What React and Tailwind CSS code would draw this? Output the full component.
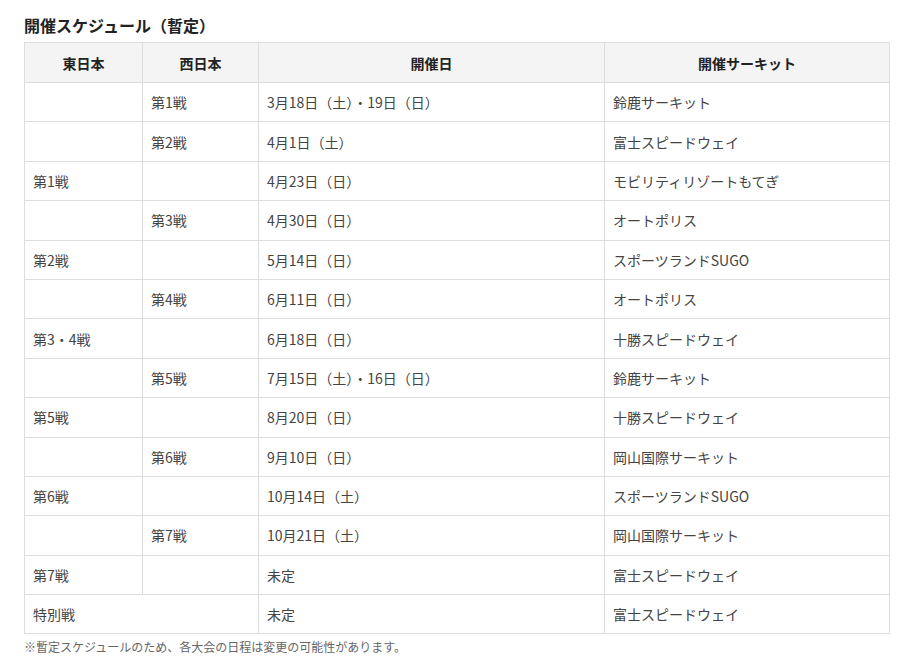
const rows = [
  { east: '', west: '第1戦', date: '3月18日（土）・19日（日）', circuit: '鈴鹿サーキット' },
  { east: '', west: '第2戦', date: '4月1日（土）', circuit: '富士スピードウェイ' },
  { east: '第1戦', west: '', date: '4月23日（日）', circuit: 'モビリティリゾートもてぎ' },
  { east: '', west: '第3戦', date: '4月30日（日）', circuit: 'オートポリス' },
  { east: '第2戦', west: '', date: '5月14日（日）', circuit: 'スポーツランドSUGO' },
  { east: '', west: '第4戦', date: '6月11日（日）', circuit: 'オートポリス' },
  { east: '第3・4戦', west: '', date: '6月18日（日）', circuit: '十勝スピードウェイ' },
  { east: '', west: '第5戦', date: '7月15日（土）・16日（日）', circuit: '鈴鹿サーキット' },
  { east: '第5戦', west: '', date: '8月20日（日）', circuit: '十勝スピードウェイ' },
  { east: '', west: '第6戦', date: '9月10日（日）', circuit: '岡山国際サーキット' },
  { east: '第6戦', west: '', date: '10月14日（土）', circuit: 'スポーツランドSUGO' },
  { east: '', west: '第7戦', date: '10月21日（土）', circuit: '岡山国際サーキット' },
  { east: '第7戦', west: '', date: '未定', circuit: '富士スピードウェイ' },
];

const cell = 'border border-[#dddddd] pl-[8px] pr-2 py-0 text-left align-middle';
const head = 'border border-[#dddddd] bg-[#f4f4f4] font-bold text-center align-middle text-[#222222]';

export default function App() {
  return (
    <div
      className="min-h-[668px] bg-white px-6 pt-[13px] text-[#444444]"
      style={{ fontFamily: '"Noto Sans CJK JP", "Noto Sans", sans-serif' }}
    >
      <h2 className="text-[16px] font-bold leading-6 text-[#222222]">開催スケジュール（暫定）</h2>
      <table className="mt-[5px] w-[865px] table-fixed border-collapse text-[14px] leading-5">
        <colgroup>
          <col className="w-[118px]" />
          <col className="w-[116px]" />
          <col className="w-[346px]" />
          <col className="w-[285px]" />
        </colgroup>
        <thead>
          <tr className="h-[40px]">
            <th className={head}>東日本</th>
            <th className={head}>西日本</th>
            <th className={head}>開催日</th>
            <th className={head}>開催サーキット</th>
          </tr>
        </thead>
        <tbody>
          {rows.map((r, i) => (
            <tr key={i} className="h-[39.4px]">
              <td className={cell}>{r.east}</td>
              <td className={cell}>{r.west}</td>
              <td className={cell}>{r.date}</td>
              <td className={cell}>{r.circuit}</td>
            </tr>
          ))}
          <tr className="h-[39.4px]">
            <td className={cell} colSpan={2}>特別戦</td>
            <td className={cell}>未定</td>
            <td className={cell}>富士スピードウェイ</td>
          </tr>
        </tbody>
      </table>
      <p className="mt-[4px] text-[12px] leading-[18px] text-[#666666]">
        ※暫定スケジュールのため、各大会の日程は変更の可能性があります。
      </p>
    </div>
  );
}
